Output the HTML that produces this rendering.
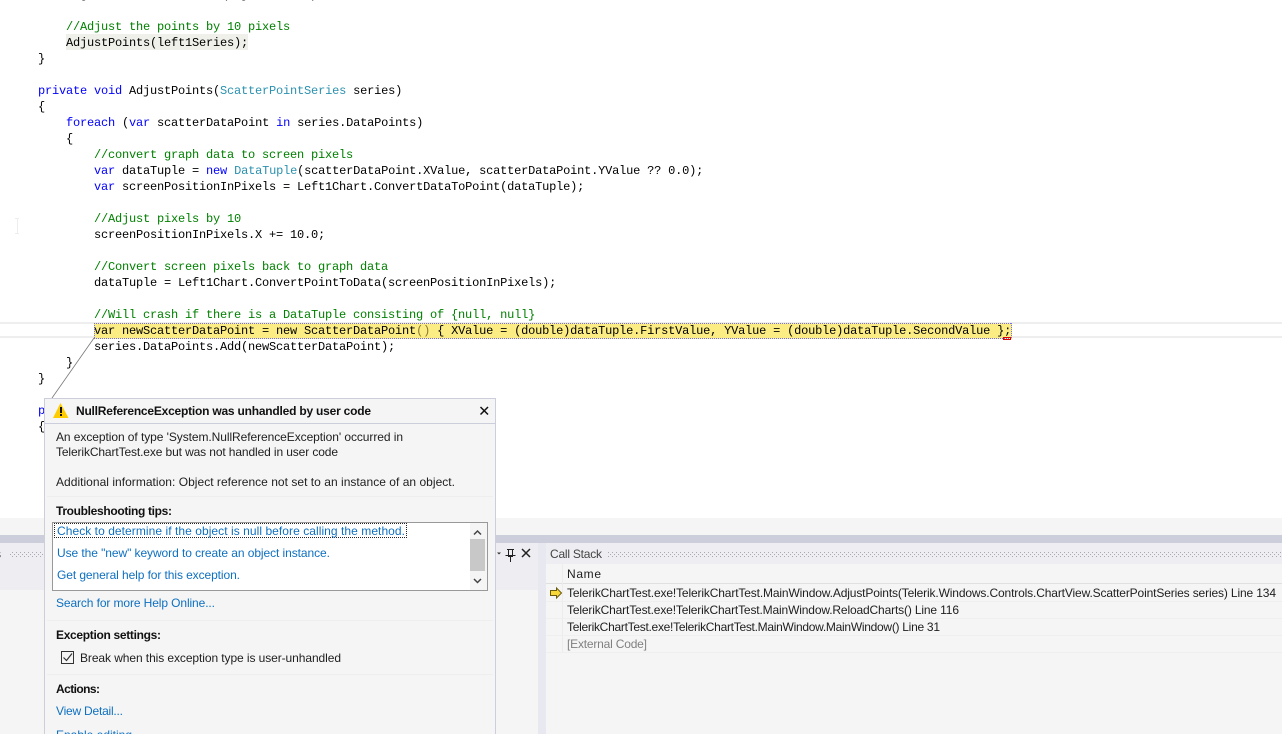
<!DOCTYPE html>
<html><head><meta charset="utf-8"><style>
html,body{margin:0;padding:0;background:#fff;width:1282px;height:734px;overflow:hidden}
svg{display:block;position:absolute;left:0;top:0}
.c{font-family:"Liberation Mono",monospace;font-size:12px;letter-spacing:-.2px;fill:#000;white-space:pre}
.k{fill:#0000ff}.g{fill:#008000}.t{fill:#2b91af}
.u{font-family:"Liberation Sans",sans-serif;font-size:12px;fill:#1e1e1e}
.b{font-weight:bold;fill:#111}
.l{fill:#0e70c0}
</style></head><body>
<svg width="1282" height="734" viewBox="0 0 1282 734" xml:space="preserve">
<defs><pattern id="d" width="4" height="4" patternUnits="userSpaceOnUse"><rect width="1" height="1" fill="#a8a8b0"/><rect x="2" y="2" width="1" height="1" fill="#a8a8b0"/></pattern></defs>
<rect width="1282" height="734" fill="#fff"/>
<!-- editor -->
<rect x="66" y="34" width="182" height="16" fill="#eff0ea"/>
<rect x="0" y="322" width="1282" height="2" fill="#eeeeee"/>
<rect x="0" y="336" width="1282" height="2" fill="#eeeeee"/>
<rect x="94" y="323" width="918" height="16" fill="#fcec84"/>
<path d="M94 323.500h918M94 338.500h918M94.500 323v16M1011.500 323v16" stroke="#7070f0" stroke-dasharray="1 1" fill="none"/>
<rect x="1003.500" y="337.500" width="7" height="2" fill="none" stroke="#e00000"/>
<path d="M15 218.500h4M17.500 218v15M15 233.500h4" stroke="#eeeeee" fill="none"/>
<g class="c">
<text x="80" y="-2">g</text><text x="222" y="-2">(</text><text x="240" y="-2">g</text><text x="310" y="-2">)</text>
<text x="66" y="30" class="c g">//Adjust the points by 10 pixels</text>
<text x="66" y="46">AdjustPoints(left1Series);</text>
<text x="38" y="62">}</text>
<text x="38" y="94"><tspan class="k">private void</tspan> AdjustPoints(<tspan class="t">ScatterPointSeries</tspan> series)</text>
<text x="38" y="110">{</text>
<text x="66" y="126"><tspan class="k">foreach</tspan> (<tspan class="k">var</tspan> scatterDataPoint <tspan class="k">in</tspan> series.DataPoints)</text>
<text x="66" y="142">{</text>
<text x="94" y="158" class="c g">//convert graph data to screen pixels</text>
<text x="94" y="174"><tspan class="k">var</tspan> dataTuple = <tspan class="k">new</tspan> <tspan class="t">DataTuple</tspan>(scatterDataPoint.XValue, scatterDataPoint.YValue ?? 0.0);</text>
<text x="94" y="190"><tspan class="k">var</tspan> screenPositionInPixels = Left1Chart.ConvertDataToPoint(dataTuple);</text>
<text x="94" y="222" class="c g">//Adjust pixels by 10</text>
<text x="94" y="238">screenPositionInPixels.X += 10.0;</text>
<text x="94" y="270" class="c g">//Convert screen pixels back to graph data</text>
<text x="94" y="286">dataTuple = Left1Chart.ConvertPointToData(screenPositionInPixels);</text>
<text x="94" y="318" class="c g">//Will crash if there is a DataTuple consisting of {null, null}</text>
<text x="94" y="334">var newScatterDataPoint = new ScatterDataPoint<tspan fill="#8a7a30">()</tspan> { XValue = (double)dataTuple.FirstValue, YValue = (double)dataTuple.SecondValue };</text>
<text x="94" y="350">series.DataPoints.Add(newScatterDataPoint);</text>
<text x="66" y="366">}</text>
<text x="38" y="382">}</text>
<text x="38" y="414" class="c k">p</text>
<text x="38" y="430">{</text>
</g>
<path d="M94 338L52 398" stroke="#777" stroke-width=".8" fill="none"/>
<!-- bottom area -->
<rect x="0" y="518" width="1282" height="17" fill="#f5f5f5"/>
<rect x="0" y="535" width="1282" height="8" fill="#ccceDB"/>
<rect x="0" y="543" width="1282" height="191" fill="#f5f5f5"/>
<rect x="0" y="543" width="539" height="47" fill="#eeeef2"/>
<rect x="10" y="551" width="34" height="6" fill="url(#d)"/>
<text x="-5" y="558" class="u">s</text>
<path d="M507 549.500h7M508.500 549v7.500h4V549M510.500 556v6M505.500 555.500h10" stroke="#222" fill="none"/>
<path d="M522 549l8 8M530 549l-8 8" stroke="#222" stroke-width="1.500" fill="none"/>
<path d="M497 552.500h4l-2 2z" fill="#333"/>
<!-- splitter -->
<rect x="538" y="543" width="8" height="191" fill="#e8e9f0"/>
<rect x="546" y="543" width="736" height="21" fill="#eeeef2"/>
<text x="550" y="558" class="u" style="fill:#444" textLength="52">Call Stack</text>
<rect x="608" y="551" width="674" height="6" fill="url(#d)"/>
<!-- grid -->
<rect x="546" y="564" width="736" height="170" fill="#f5f5f5"/>
<path d="M546 583.500h736" stroke="#e0e0e0"/>
<path d="M546 601.500h736M546 618.500h736M546 635.500h736M546 652.500h736" stroke="#efefef"/>
<path d="M562.500 564v89" stroke="#ececec"/>
<text x="567" y="578" class="u" textLength="34">Name</text>
<path d="M550.500 590.500h6v-2.500l5 5-5 5v-2.500h-6z" fill="#f8d838" stroke="#6a5a10"/>
<text x="567" y="597" class="u" textLength="709">TelerikChartTest.exe!TelerikChartTest.MainWindow.AdjustPoints(Telerik.Windows.Controls.ChartView.ScatterPointSeries series) Line 134</text>
<text x="567" y="614" class="u" textLength="392">TelerikChartTest.exe!TelerikChartTest.MainWindow.ReloadCharts() Line 116</text>
<text x="567" y="631" class="u" textLength="373">TelerikChartTest.exe!TelerikChartTest.MainWindow.MainWindow() Line 31</text>
<text x="567" y="648" class="u" style="fill:#808080" textLength="80">[External Code]</text>
<!-- popup -->
<rect x="44.500" y="398.500" width="451" height="340" fill="#f5f5f5" stroke="#ccceDB"/>
<path d="M45 423.500h450" stroke="#ccceDB"/>
<path d="M47 496.500h446M47 620.500h446M47 674.500h446" stroke="#eeeeee"/>
<path d="M60.500 403L68.500 418H53z" fill="#ffcc00"/>
<rect x="60" y="407" width="2" height="6" fill="#111"/><rect x="60" y="414" width="2" height="2" fill="#111"/>
<text x="76" y="415" class="u b" textLength="295">NullReferenceException was unhandled by user code</text>
<path d="M480.500 407l7.500 7.500M488 407l-7.500 7.500" stroke="#111" stroke-width="1.500" fill="none"/>
<text x="56" y="441" class="u" textLength="347">An exception of type 'System.NullReferenceException' occurred in</text>
<text x="56" y="456" class="u" textLength="282">TelerikChartTest.exe but was not handled in user code</text>
<text x="56" y="486" class="u" textLength="399">Additional information: Object reference not set to an instance of an object.</text>
<text x="56" y="515" class="u b" textLength="116">Troubleshooting tips:</text>
<rect x="52.500" y="522.500" width="435" height="68" fill="#fff" stroke="#999"/>
<rect x="470" y="523" width="17" height="67" fill="#f5f5f5"/>
<rect x="470" y="539" width="15" height="32" fill="#c8c8c8"/>
<path d="M474 534.500l3.500-3.500 3.500 3.500M474 579l3.500 3.500 3.500-3.500" stroke="#444" stroke-width="1.500" fill="none"/>
<path d="M54 523.500h353M54 537.500h353M54.500 523v15M406.500 523v15" stroke="#222" stroke-dasharray="1 1" fill="none"/>
<text x="57" y="535" class="u l" textLength="348">Check to determine if the object is null before calling the method.</text>
<text x="57" y="557" class="u l" textLength="273">Use the "new" keyword to create an object instance.</text>
<text x="57" y="579" class="u l" textLength="183">Get general help for this exception.</text>
<text x="56" y="607" class="u l" textLength="159">Search for more Help Online...</text>
<text x="56" y="639" class="u b" textLength="105">Exception settings:</text>
<rect x="61.500" y="651.500" width="12" height="12" fill="#f5f5f5" stroke="#333"/>
<path d="M63.500 657.500l3 3 5.500-7" stroke="#333" stroke-width="1.200" fill="none"/>
<text x="80" y="662" class="u" textLength="261">Break when this exception type is user-unhandled</text>
<text x="56" y="693" class="u b" textLength="44">Actions:</text>
<text x="56" y="715" class="u l" textLength="67">View Detail...</text>
<text x="56" y="739" class="u l" textLength="76">Enable editing</text>
</svg>
</body></html>
